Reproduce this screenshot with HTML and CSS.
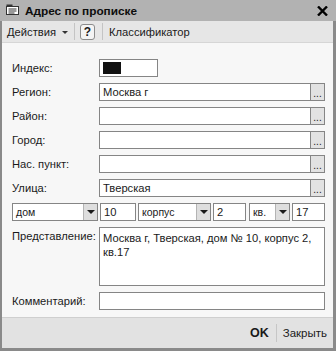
FILE: index.html
```html
<!DOCTYPE html>
<html lang="ru">
<head>
<meta charset="utf-8">
<link rel="stylesheet" href="styles.css">
</head>
<body>
<div class="window">
  <div class="titlebar">
    <svg class="ticon" width="13" height="11" viewBox="0 0 13 11">
      <rect x="0.5" y="2.5" width="12" height="8" fill="#fff" stroke="#333"/>
      <rect x="0.5" y="0.5" width="6" height="2" fill="#333"/>
      <line x1="2.5" y1="5" x2="10.5" y2="5" stroke="#333"/>
      <line x1="2.5" y1="7" x2="10.5" y2="7" stroke="#333"/>
      <line x1="2.5" y1="9" x2="8.5" y2="9" stroke="#333"/>
    </svg>
    <span class="title">Адрес по прописке</span>
    <svg class="close" width="11" height="10" viewBox="0 0 11 10">
      <path d="M1 0.5 L10 9.5 M10 0.5 L1 9.5" stroke="#000" stroke-width="2.4"/>
    </svg>
  </div>
  <div class="frame">
    <div class="toolbar">
      <span class="tb-item">Действия</span>
      <span class="caret"></span>
      <span class="tb-sep"></span>
      <span class="help">?</span>
      <span class="tb-sep"></span>
      <span class="tb-item">Классификатор</span>
    </div>
    <div class="content">
      <div class="row">
        <span class="label">Индекс:</span>
        <div class="field index"><span class="mask"></span></div>
      </div>
      <div class="row">
        <span class="label">Регион:</span>
        <div class="combo"><div class="field grow">Москва г</div><span class="dots">...</span></div>
      </div>
      <div class="row">
        <span class="label">Район:</span>
        <div class="combo"><div class="field grow"></div><span class="dots">...</span></div>
      </div>
      <div class="row">
        <span class="label">Город:</span>
        <div class="combo"><div class="field grow"></div><span class="dots">...</span></div>
      </div>
      <div class="row">
        <span class="label">Нас. пункт:</span>
        <div class="combo"><div class="field grow"></div><span class="dots">...</span></div>
      </div>
      <div class="row">
        <span class="label">Улица:</span>
        <div class="combo"><div class="field grow">Тверская</div><span class="dots">...</span></div>
      </div>
      <div class="house">
        <div class="select w-dom"><span class="sel-text">дом</span><span class="arrow"></span></div>
        <div class="field w-num1">10</div>
        <div class="select w-korp"><span class="sel-text">корпус</span><span class="arrow"></span></div>
        <div class="field w-num2">2</div>
        <div class="select w-kv"><span class="sel-text">кв.</span><span class="arrow"></span></div>
        <div class="field grow">17</div>
      </div>
      <div class="row top">
        <span class="label">Представление:</span>
        <div class="field area">Москва г, Тверская, дом № 10, корпус 2, кв.17</div>
      </div>
      <div class="row">
        <span class="label">Комментарий:</span>
        <div class="field grow"></div>
      </div>
    </div>
    <div class="footer">
      <span class="ok">OK</span>
      <span class="f-sep"></span>
      <span class="closebtn">Закрыть</span>
    </div>
  </div>
</div>
</body>
</html>
```

FILE: styles.css
```css
* { box-sizing: border-box; }
html, body { margin: 0; padding: 0; }
body {
  font-family: "Liberation Sans", Arial, sans-serif;
  font-size: 11.2px;
  color: #1a1a1a;
  background: #fff;
}
.window {
  width: 336px;
  height: 351px;
  display: flex;
  flex-direction: column;
}
.titlebar {
  height: 21px;
  flex: none;
  background: #b2b2b2;
  display: flex;
  align-items: center;
  padding: 0 8px 0 6px;
}
.ticon { flex: none; margin-top: -2px; }
.title {
  font-weight: bold;
  font-size: 11.8px;
  margin-left: 6px;
  color: #0d0d0d;
  flex: 1;
}
.close { flex: none; }
.frame {
  flex: 1;
  display: flex;
  flex-direction: column;
  border-left: 2px solid #8a8a8a;
  border-right: 3px solid #8a8a8a;
  border-bottom: 3px solid #8a8a8a;
  min-height: 0;
}
.toolbar {
  height: 22px;
  flex: none;
  background: #e6e6e6;
  display: flex;
  align-items: center;
  padding-left: 5px;
  border-bottom: 1px solid #d6d6d6;
}
.tb-item { color: #1a1a1a; }
.caret {
  width: 0; height: 0;
  border-left: 3px solid transparent;
  border-right: 3px solid transparent;
  border-top: 3px solid #333;
  margin-left: 6px;
  margin-top: 1px;
}
.tb-sep {
  width: 1px;
  height: 17px;
  background: #c4c4c4;
  margin: 0 5px 0 6px;
}
.help {
  width: 15px;
  height: 16px;
  border: 1px solid #8c8c8c;
  border-radius: 3px;
  background: #f4f4f4;
  font-weight: bold;
  font-size: 12px;
  display: flex;
  align-items: center;
  justify-content: center;
  margin-right: 1px;
}
.help + .tb-sep { margin: 0 6px 0 6px; }
.content {
  flex: 1;
  background: #f7f7f7;
  padding: 16px 8px 0 10px;
  display: flex;
  flex-direction: column;
  gap: 6px;
}
.row {
  display: flex;
  align-items: center;
  height: 18px;
}
.row.top { align-items: flex-start; height: auto; }
.row.top .label { padding-top: 3px; }
.label {
  width: 87px;
  flex: none;
  color: #1a1a1a;
  white-space: nowrap;
}
.field {
  height: 18px;
  background: #fff;
  border: 1px solid #858585;
  padding: 0 3px;
  display: flex;
  align-items: center;
  white-space: nowrap;
  overflow: hidden;
}
.grow { flex: 1; min-width: 0; }
.index { width: 59px; flex: none; padding-left: 3px; }
.mask { width: 18px; height: 12px; background: #111; }
.combo { flex: 1; display: flex; }
.dots {
  width: 14px;
  height: 18px;
  flex: none;
  background: #e2e2e2;
  border: 1px solid #858585;
  border-left: none;
  font-size: 10px;
  display: flex;
  align-items: center;
  justify-content: center;
  line-height: 1;
  padding-top: 3px;
}
.house {
  display: flex;
  gap: 2px;
  height: 18px;
}
.select {
  height: 18px;
  background: #fff;
  border: 1px solid #858585;
  display: flex;
  align-items: stretch;
  flex: none;
}
.sel-text {
  flex: 1;
  padding-left: 3px;
  display: flex;
  align-items: center;
  font-size: 10.5px;
}
.arrow {
  width: 14px;
  background: #dedede;
  border-left: 1px solid #b4b4b4;
  position: relative;
}
.arrow::after {
  content: "";
  position: absolute;
  left: 3px;
  top: 6px;
  border-left: 4px solid transparent;
  border-right: 4px solid transparent;
  border-top: 4px solid #1a1a1a;
}
.w-dom { width: 86px; }
.w-num1 { width: 36px; flex: none; }
.w-korp { width: 73px; }
.w-num2 { width: 33px; flex: none; }
.w-kv { width: 41px; margin-left: 1px; }
.area {
  flex: 1;
  height: 59px;
  align-items: flex-start;
  white-space: normal;
  line-height: 14px;
  padding: 3px 3px;
}
.footer {
  height: 31px;
  flex: none;
  background: #e2e2e2;
  border-top: 1px solid #cfcfcf;
  display: flex;
  align-items: center;
  justify-content: flex-end;
  padding-right: 6px;
}
.ok { font-weight: bold; font-size: 12.5px; }
.f-sep {
  width: 1px;
  height: 18px;
  background: #c6c6c6;
  margin: 0 6px 0 7px;
}
.closebtn { font-size: 11.5px; }
```
